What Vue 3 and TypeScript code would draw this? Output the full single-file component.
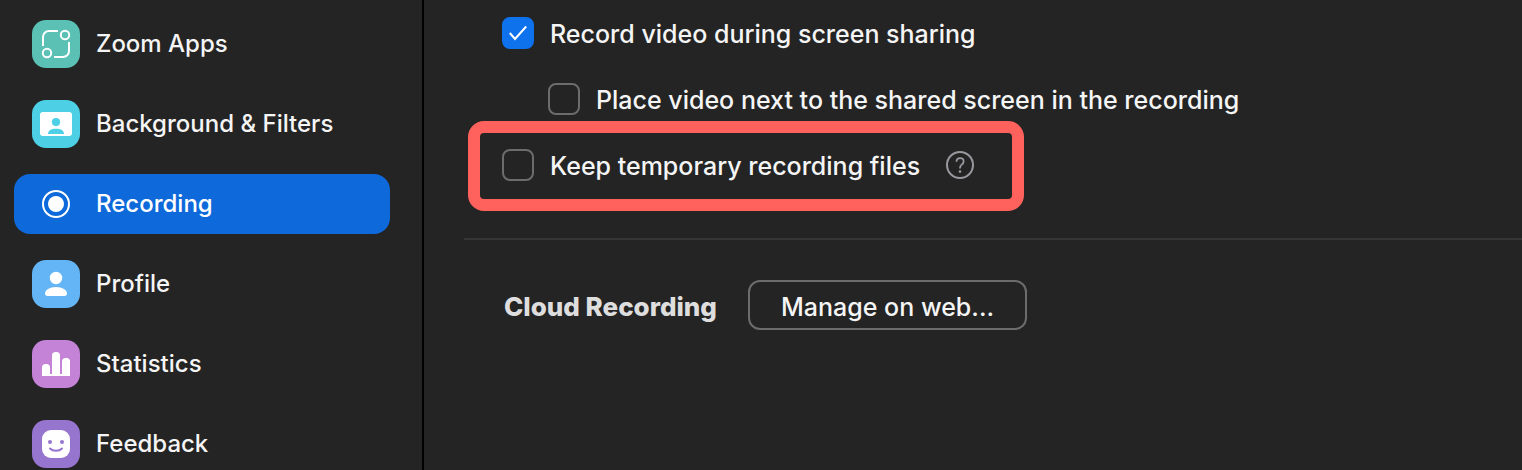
<script setup lang="ts">
import { ref } from 'vue'

type IconName = 'apps' | 'background' | 'recording' | 'profile' | 'statistics' | 'feedback'

interface NavItem {
  id: IconName
  label: string
}

const navItems: NavItem[] = [
  { id: 'apps', label: 'Zoom Apps' },
  { id: 'background', label: 'Background & Filters' },
  { id: 'recording', label: 'Recording' },
  { id: 'profile', label: 'Profile' },
  { id: 'statistics', label: 'Statistics' },
  { id: 'feedback', label: 'Feedback' },
]

const active = ref<IconName>('recording')
const recordSharing = ref(true)
const placeNext = ref(false)
const keepFiles = ref(false)
</script>

<template>
  <div class="settings">
    <nav class="sidebar" aria-label="Settings">
      <button
        v-for="item in navItems"
        :key="item.id"
        type="button"
        class="nav-item"
        :class="{ active: active === item.id }"
        @click="active = item.id"
      >
        <span class="tile" :class="item.id">
          <svg viewBox="0 0 48 48" fill="none" aria-hidden="true">
            <g v-if="item.id === 'apps'" stroke="#fff" stroke-width="2">
              <path d="M11 26V17a6 6 0 0 1 6-6h9" />
              <path d="M37 22v9a6 6 0 0 1-6 6h-9" />
              <circle cx="33" cy="15" r="4.2" />
              <circle cx="15" cy="33" r="4.2" />
            </g>
            <g v-else-if="item.id === 'background'">
              <rect x="8" y="12" width="32" height="24" rx="3" fill="#fff" />
              <circle cx="24" cy="22" r="4.1" fill="#4dcfe6" />
              <path d="M16 34c0-3.4 3-5.2 8-5.2s8 1.800 8 5.200z" fill="#4dcfe6" />
            </g>
            <g v-else-if="item.id === 'recording'">
              <circle cx="24" cy="24" r="13" stroke="#fff" stroke-width="2" />
              <circle cx="24" cy="24" r="8" fill="#fff" />
            </g>
            <g v-else-if="item.id === 'profile'" fill="#fff">
              <circle cx="24" cy="18" r="6.2" />
              <path d="M24 27c6.500 0 11 3 11 6.500 0 1.600-1 2.500-2.500 2.500h-17C14 36 13 35.100 13 33.500 13 30 17.500 27 24 27z" />
            </g>
            <g v-else-if="item.id === 'statistics'" fill="#fff">
              <path d="M10 36v-8.500a3.500 3.500 0 0 1 3.500-3.500h1a3.500 3.500 0 0 1 3.500 3.500V36z" />
              <path d="M20 36V15.500a3.500 3.500 0 0 1 3.500-3.500h1a3.500 3.500 0 0 1 3.500 3.500V36z" />
              <path d="M30 36V21.500a3.500 3.500 0 0 1 3.500-3.500h1a3.500 3.500 0 0 1 3.500 3.500V36z" />
              <path d="M10 34h28v2H10z" />
            </g>
            <g v-else>
              <rect x="10" y="10" width="28" height="28" rx="9" fill="#fff" />
              <circle cx="18" cy="22" r="2" fill="#9575cd" />
              <circle cx="30" cy="22" r="2" fill="#9575cd" />
              <path d="M18 28.500c3 3 9 3 12 0" stroke="#9575cd" stroke-width="2" stroke-linecap="round" />
            </g>
          </svg>
        </span>
        <span>{{ item.label }}</span>
      </button>
    </nav>

    <main class="content">
      <div class="option">
        <span class="check">
          <input id="record-sharing" v-model="recordSharing" type="checkbox" />
          <svg v-if="recordSharing" viewBox="0 0 32 32" fill="none" aria-hidden="true">
            <path d="M7.800 16l5.200 6L24.200 9.500" stroke="#fff" stroke-width="2" />
          </svg>
        </span>
        <label for="record-sharing">Record video during screen sharing</label>
      </div>

      <div class="option nested">
        <span class="check">
          <input id="place-next" v-model="placeNext" type="checkbox" />
          <svg v-if="placeNext" viewBox="0 0 32 32" fill="none" aria-hidden="true">
            <path d="M7.800 16l5.200 6L24.200 9.500" stroke="#fff" stroke-width="2" />
          </svg>
        </span>
        <label for="place-next">Place video next to the shared screen in the recording</label>
      </div>

      <div class="option highlighted">
        <span class="check">
          <input id="keep-files" v-model="keepFiles" type="checkbox" />
          <svg v-if="keepFiles" viewBox="0 0 32 32" fill="none" aria-hidden="true">
            <path d="M7.800 16l5.200 6L24.200 9.500" stroke="#fff" stroke-width="2" />
          </svg>
        </span>
        <label for="keep-files">Keep temporary recording files</label>
        <button type="button" class="help" aria-label="Help">
          <svg viewBox="0 0 28 28" fill="none" stroke="#98989f" aria-hidden="true">
            <circle cx="14" cy="14" r="13" stroke-width="2" />
            <path d="M10.500 10.800c0-2.300 1.500-3.700 3.600-3.700s3.500 1.400 3.500 3.300c0 1.500-.8 2.300-1.900 3.200-1.200 1-1.700 1.700-1.700 3.400v.5" stroke-width="1.800" />
            <circle cx="14" cy="20.600" r="1.300" fill="#98989f" stroke="none" />
          </svg>
        </button>
      </div>

      <section class="cloud">
        <h2>Cloud Recording</h2>
        <button type="button" class="manage">Manage on web...</button>
      </section>
    </main>
  </div>
</template>

<style>
body {
  margin: 0;
  background: #242424;
}
</style>

<style scoped>
.settings {
  display: flex;
  height: 100vh;
  overflow: hidden;
  background: #242424;
  color: #f5f5f5;
  font-family: Inter, "Liberation Sans", sans-serif;
}

button {
  margin: 0;
  border: 0;
  background: none;
  color: inherit;
  font-family: inherit;
  cursor: pointer;
}

.sidebar {
  box-sizing: border-box;
  flex: 0 0 424px;
  display: flex;
  flex-direction: column;
  gap: 20px;
  padding: 14px 32px 0 14px;
  border-right: 2px solid #000;
}

.nav-item {
  flex: none;
  display: flex;
  align-items: center;
  gap: 16px;
  height: 60px;
  padding: 0 18px;
  border-radius: 16px;
  font-size: 24px;
  font-weight: 500;
  line-height: 32px;
  text-align: left;
}

.nav-item.active {
  background: #0e69da;
  color: #fff;
}

.tile {
  width: 48px;
  height: 48px;
  border-radius: 14px;
}

.tile svg,
.help svg {
  display: block;
  width: 100%;
  height: 100%;
}

.apps { background: #5bc1b5; }
.background { background: #4dcfe6; }
.profile { background: #64b5f6; }
.statistics { background: #c583d8; }
.feedback { background: #9575cd; }

.content {
  flex: 1;
  min-width: 0;
  padding-left: 40px;
}

.option {
  display: flex;
  align-items: center;
  gap: 16px;
  height: 66px;
  padding-left: 38px;
  font-size: 25px;
  font-weight: 500;
  line-height: 32px;
}

.option label {
  padding-top: 2px;
}

.option.nested {
  padding-left: 84px;
}

.check {
  display: grid;
  width: 32px;
  height: 32px;
}

.check input,
.check svg {
  grid-area: 1 / 1;
  width: 32px;
  height: 32px;
}

.check svg {
  pointer-events: none;
}

.check input {
  appearance: none;
  box-sizing: border-box;
  margin: 0;
  border: 2px solid #6c6c6c;
  border-radius: 8px;
}

.check input:checked {
  border-color: #0e72ed;
  background: #0e72ed;
}

.highlighted {
  position: relative;
  box-sizing: border-box;
  width: fit-content;
  padding-right: 38px;
}

.highlighted::before {
  content: "";
  position: absolute;
  inset: -11px -12px -13px 4px;
  border: 12px solid #ff625c;
  border-radius: 16px;
  pointer-events: none;
}

.help {
  width: 28px;
  height: 28px;
  margin-left: 10px;
  padding: 0;
}

.cloud {
  display: flex;
  align-items: center;
  gap: 31px;
  margin-top: 40px;
  padding: 40px 0 0 40px;
  border-top: 2px solid #363636;
}

.cloud h2 {
  margin: 0;
  padding-top: 4px;
  color: #dedede;
  font-size: 26px;
  font-weight: 800;
  line-height: 32px;
}

.manage {
  height: 50px;
  padding: 4px 31px 0;
  border: 2px solid #6c6c6c;
  border-radius: 12px;
  font-size: 25px;
  font-weight: 500;
  line-height: 32px;
}
</style>
